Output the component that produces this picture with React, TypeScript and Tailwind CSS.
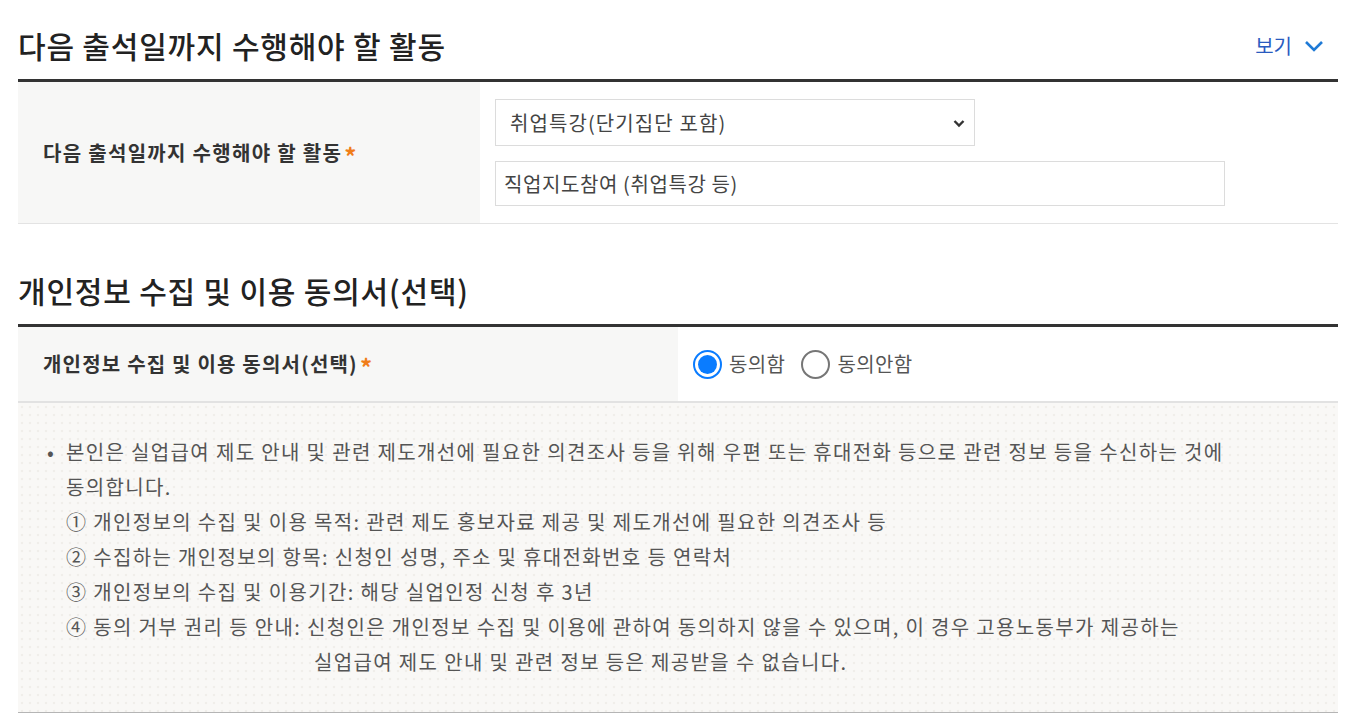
const FONT = "font-['Noto_Sans_CJK_KR','Noto_Sans',sans-serif]"

function Required() {
  return <span className="text-[#f07d19] text-[24px] leading-none ml-[2px] translate-y-[3px] inline-block">*</span>
}

function Radio({ checked, label }: { checked: boolean; label: string }) {
  return (
    <label className="flex items-center gap-[7px]">
      {checked ? (
        <span className="w-[29px] h-[29px] rounded-full border-2 border-[#0a7cff] flex items-center justify-center bg-white">
          <span className="w-[19px] h-[19px] rounded-full bg-[#0a7cff]" />
        </span>
      ) : (
        <span className="w-[29px] h-[29px] rounded-full border-2 border-[#767676] bg-white" />
      )}
      <span className="text-[20px] tracking-[0.4px] text-[#555]">{label}</span>
    </label>
  )
}

const items = [
  "① 개인정보의 수집 및 이용 목적: 관련 제도 홍보자료 제공 및 제도개선에 필요한 의견조사 등",
  "② 수집하는 개인정보의 항목: 신청인 성명, 주소 및 휴대전화번호 등 연락처",
  "③ 개인정보의 수집 및 이용기간: 해당 실업인정 신청 후 3년",
  "④ 동의 거부 권리 등 안내: 신청인은 개인정보 수집 및 이용에 관하여 동의하지 않을 수 있으며, 이 경우 고용노동부가 제공하는",
]

export default function App() {
  return (
    <div className={`${FONT} bg-white min-h-[724px] px-[18px] pr-[20px] text-[#333]`}>
      {/* 다음 출석일까지 수행해야 할 활동 */}
      <div className="flex items-center justify-between h-[79px] pt-[12px]">
        <h2 className="text-[30px] font-medium tracking-[0.8px] text-[#222]">다음 출석일까지 수행해야 할 활동</h2>
        <button className="flex items-center gap-[12px] text-[#2a5bbf] text-[20px] mr-[14px]">
          보기
          <svg width="20" height="14" viewBox="0 0 20 14" fill="none" stroke="#1f7ad6" strokeWidth="2.6">
            <path d="M2 3l8 8 8-8" />
          </svg>
        </button>
      </div>
      <div className="border-t-[3px] border-[#333] flex border-b border-b-[#e3e3e3] h-[145px]">
        <div className="w-[462px] bg-[#f7f7f6] flex items-center pl-[25px] text-[20px] font-bold tracking-[1.3px] text-[#333]">
          다음 출석일까지 수행해야 할 활동<Required />
        </div>
        <div className="flex-1 pl-[15px] pt-[17px] flex flex-col gap-[15px]">
          <div className="w-[480px] h-[47px] border border-[#dcdcdc] flex items-center justify-between pl-[14px] pr-[6px] text-[20px] tracking-[1.1px] text-[#444]">
            <span>취업특강(단기집단 포함)</span>
            <svg width="18" height="18" viewBox="0 0 18 18" fill="none" stroke="#333" strokeWidth="2.4">
              <path d="M4.5 7l4.5 4.5L13.5 7" />
            </svg>
          </div>
          <div className="w-[730px] h-[45px] border border-[#dcdcdc] flex items-center pl-[8px] text-[20px] tracking-[0.6px] text-[#444]">
            직업지도참여 (취업특강 등)
          </div>
        </div>
      </div>

      {/* 개인정보 수집 및 이용 동의서(선택) */}
      <div className="flex items-center h-[100px] pt-[32px]">
        <h2 className="text-[30px] font-medium tracking-[0.8px] text-[#222]">개인정보 수집 및 이용 동의서(선택)</h2>
      </div>
      <div className="border-t-[3px] border-[#333] flex border-b-2 border-b-[#e2e2e2] h-[79px]">
        <div className="w-[660px] bg-[#f7f7f6] flex items-center pl-[25px] text-[20px] font-bold tracking-[1.2px] text-[#333]">
          개인정보 수집 및 이용 동의서(선택)<Required />
        </div>
        <div className="flex-1 flex items-center gap-[16px] pl-[15px]">
          <Radio checked label="동의함" />
          <Radio checked={false} label="동의안함" />
        </div>
      </div>
      <div className="bg-[#f9f8f6] bg-[radial-gradient(#f0eeea_1.2px,transparent_1.6px)] bg-size-[8px_8px] border-b border-[#b5b5b5] h-[310px] pt-[31px] pl-[29px] text-[20px] text-[#555] leading-[35px] tracking-[1.35px]">
        <div className="flex">
          <span className="w-[19px] shrink-0">•</span>
          <div>
            <p>
              본인은 실업급여 제도 안내 및 관련 제도개선에 필요한 의견조사 등을 위해 우편 또는 휴대전화 등으로 관련 정보 등을 수신하는 것에
              <br />
              동의합니다.
            </p>
            {items.map((t) => (
              <p key={t}>{t}</p>
            ))}
            <p className="pl-[248px]">실업급여 제도 안내 및 관련 정보 등은 제공받을 수 없습니다.</p>
          </div>
        </div>
      </div>
    </div>
  )
}
